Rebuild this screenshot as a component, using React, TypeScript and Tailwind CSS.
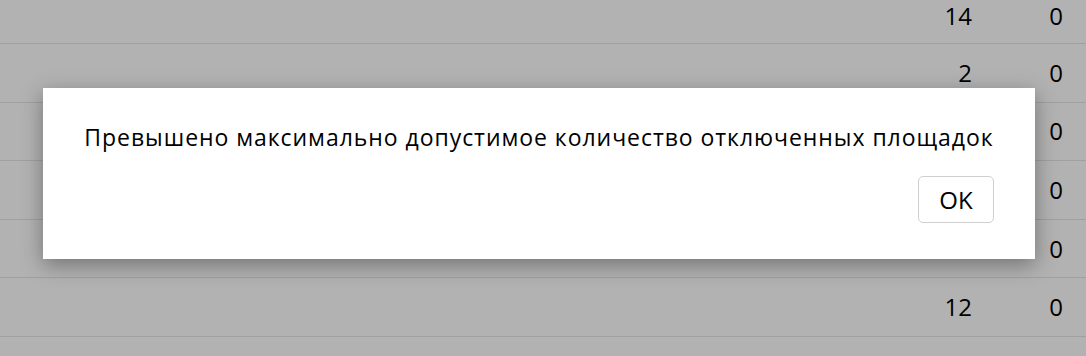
import React from "react";

const rows = ["14", "2", "", "", "", "12", ""];

export default function App() {
  return (
    <div
      className="relative h-[356px] w-[1086px] overflow-hidden bg-white"
      style={{ fontFamily: '"Open Sans", "Noto Sans", sans-serif' }}
    >
      <div className="flex flex-col">
        {rows.map((v, i) => (
          <div
            key={i}
            className={
              i === 0
                ? "flex h-[44px] items-start pt-[2px] border-b border-[#e6e6e6] text-[24px] leading-[28px] text-black"
                : "flex h-[58.6px] items-center border-b border-[#e6e6e6] text-[24px] leading-[28px] text-black"
            }
          >
            <div className="flex-1" />
            <div className="w-[100px] text-right">{v}</div>
            <div className="w-[114px] pr-[23px] text-right">{i < 6 ? "0" : ""}</div>
          </div>
        ))}
      </div>
      <div className="absolute inset-0 bg-black/30" />
      <div className="absolute left-[43px] top-[88px] flex h-[171px] w-[992px] flex-col bg-white px-[40px] pt-[34px] shadow-[0_6px_20px_rgba(0,0,0,0.35)]">
        <div className="whitespace-nowrap text-center text-[23px] leading-[30px] tracking-[0.95px] text-black">
          Превышено максимально допустимое количество отключенных площадок
        </div>
        <div className="mt-[24px] flex justify-end pr-[1px]">
          <button className="flex h-[47px] w-[76px] items-center justify-center rounded-[5px] border border-[#cfcfcf] bg-white text-[24px] text-black">
            OK
          </button>
        </div>
      </div>
    </div>
  );
}
